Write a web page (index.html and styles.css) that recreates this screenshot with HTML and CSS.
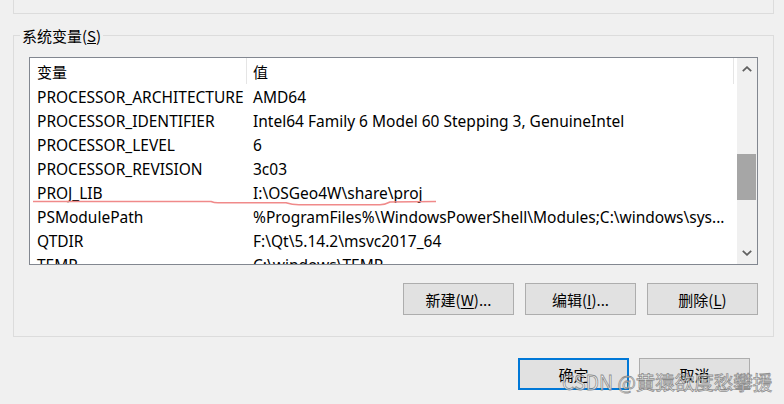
FILE: index.html
```html
<!DOCTYPE html>
<html lang="zh-CN">
<head>
<meta charset="utf-8">
<title>系统变量</title>
<link rel="stylesheet" href="styles.css">
</head>
<body>
<div class="page">
  <div class="top-box"></div>
  <div class="group">
    <div class="legend">系统变量(<u>S</u>)</div>
    <div class="list">
      <div class="list-body">
        <div class="row head">
          <div class="c1">变量</div>
          <div class="c2">值</div>
        </div>
        <div class="row"><div class="c1">PROCESSOR_ARCHITECTURE</div><div class="c2">AMD64</div></div>
        <div class="row"><div class="c1">PROCESSOR_IDENTIFIER</div><div class="c2">Intel64 Family 6 Model 60 Stepping 3, GenuineIntel</div></div>
        <div class="row"><div class="c1">PROCESSOR_LEVEL</div><div class="c2">6</div></div>
        <div class="row"><div class="c1">PROCESSOR_REVISION</div><div class="c2">3c03</div></div>
        <div class="row"><div class="c1">PROJ_LIB</div><div class="c2">I:\OSGeo4W\share\proj</div></div>
        <div class="row"><div class="c1">PSModulePath</div><div class="c2">%ProgramFiles%\WindowsPowerShell\Modules;C:\windows\sys...</div></div>
        <div class="row"><div class="c1">QTDIR</div><div class="c2">F:\Qt\5.14.2\msvc2017_64</div></div>
        <div class="row"><div class="c1">TEMP</div><div class="c2">C:\windows\TEMP</div></div>
      </div>
      <div class="scrollbar">
        <div class="sb-btn">
          <svg width="10" height="6" viewBox="0 0 10 6"><polyline points="0.8,5.2 5,1.2 9.2,5.2" fill="none" stroke="#606060" stroke-width="1.8"/></svg>
        </div>
        <div class="sb-track"><div class="sb-thumb"></div></div>
        <div class="sb-btn">
          <svg width="10" height="6" viewBox="0 0 10 6"><polyline points="0.8,0.8 5,4.8 9.2,0.8" fill="none" stroke="#606060" stroke-width="1.8"/></svg>
        </div>
      </div>
    </div>
    <div class="btn-row">
      <div class="btn">新建(<u>W</u>)...</div>
      <div class="btn">编辑(<u>I</u>)...</div>
      <div class="btn">删除(<u>L</u>)</div>
    </div>
  </div>
  <div class="ok-row">
    <div class="btn primary">确定</div>
    <div class="btn">取消</div>
  </div>
  <svg class="annot" width="784" height="404" viewBox="0 0 784 404">
    <path d="M33,201.5 L211,201.5 Q214,202.8 218,202.8 L286,202.8 Q292,204.8 299,204.8 L380,204.8 Q385,204.6 390,202 L436,201.5" fill="none" stroke="#f08a8a" stroke-width="1.6"/>
  </svg>
  <div class="watermark">CSDN @黄猿欲度愁攀援</div>
</div>
</body>
</html>
```
FILE: styles.css
```css
html, body {
  margin: 0;
  padding: 0;
  background: #f0f0f0;
}
body {
  font-family: "Noto Sans", "Noto Sans CJK SC", sans-serif;
  font-size: 15px;
  color: #000;
}
.page {
  position: relative;
  width: 784px;
  height: 404px;
  overflow: hidden;
}
.top-box {
  margin-left: 13px;
  width: 761px;
  height: 14px;
  box-sizing: border-box;
  border: 1px solid #dcdcdc;
  border-top: none;
}
.group {
  margin-top: 21px;
  margin-left: 13px;
  width: 761px;
  height: 302px;
  box-sizing: border-box;
  border: 1px solid #dcdcdc;
  padding-left: 15px;
}
.legend {
  width: fit-content;
  margin: -10px 0 0 -9px;
  padding: 0 2px;
  height: 20px;
  line-height: 20px;
  background: #f0f0f0;
  font-family: "Noto Sans CJK SC", "Noto Sans", sans-serif;
}
.list {
  margin-top: 11px;
  width: 729px;
  height: 208px;
  box-sizing: border-box;
  border: 1px solid #828790;
  background: #fff;
  display: flex;
}
.list-body {
  flex: 1;
  overflow: hidden;
  min-width: 0;
}
.row {
  display: flex;
  height: 24px;
  line-height: 24px;
  white-space: nowrap;
  font-size: 15.5px;
}
.row.head {
  height: 27px;
  line-height: 27px;
  font-size: 15px;
}
.row.head .c1,
.row.head .c2 {
  font-family: "Noto Sans CJK SC", "Noto Sans", sans-serif;
  height: 26px;
  border-right: 1px solid #e5e5e5;
}
.c1 {
  width: 217px;
  padding-left: 7px;
  box-sizing: border-box;
  overflow: hidden;
}
.c2 {
  width: 487px;
  padding-left: 6px;
  padding-right: 4px;
  box-sizing: border-box;
  overflow: hidden;
}
.scrollbar {
  width: 20px;
  background: #f0f0f0;
  display: flex;
  flex-direction: column;
}
.sb-btn {
  height: 22px;
  display: flex;
  align-items: center;
  justify-content: center;
}
.sb-track {
  flex: 1;
}
.sb-thumb {
  margin-top: 74px;
  height: 46px;
  width: 19px;
  background: #a6a6a6;
}
.btn-row {
  margin-top: 18px;
  width: 729px;
  display: flex;
  justify-content: flex-end;
  gap: 11px;
}
.btn {
  width: 111px;
  height: 32px;
  box-sizing: border-box;
  border: 1px solid #adadad;
  background: #e1e1e1;
  display: flex;
  align-items: center;
  justify-content: center;
  font-family: "Noto Sans CJK SC", "Noto Sans", sans-serif;
  font-size: 15px;
}
.btn u {
  text-underline-offset: 2px;
}
.ok-row {
  margin-top: 21px;
  padding-right: 34px;
  display: flex;
  justify-content: flex-end;
  gap: 10px;
}
.btn.primary {
  border: 2px solid #0078d7;
}
.annot {
  position: absolute;
  left: 0;
  top: 0;
  pointer-events: none;
}
.watermark {
  position: absolute;
  left: 562px;
  top: 369px;
  font-family: "Noto Sans CJK SC", sans-serif;
  font-size: 19.5px;
  line-height: 26px;
  color: rgba(255, 255, 255, 0.8);
  -webkit-text-stroke: 0.8px rgba(100, 100, 100, 0.7);
  white-space: nowrap;
}
```
